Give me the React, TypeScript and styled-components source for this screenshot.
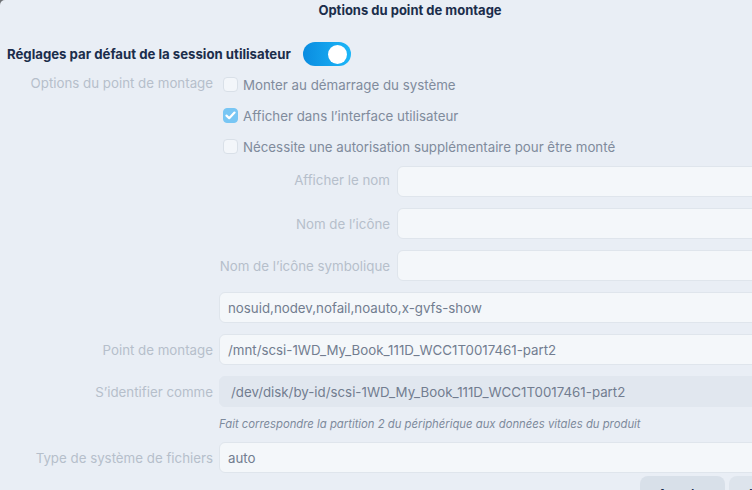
import styled, { createGlobalStyle } from "styled-components";

const GlobalStyle = createGlobalStyle`
  html, body {
    margin: 0;
    padding: 0;
    background: #6f7276;
    overflow: hidden;
  }
  body {
    font-family: Inter, "Noto Sans", sans-serif;
  }
`;

const checks = [
  { label: "Monter au démarrage du système", checked: false },
  { label: "Afficher dans l’interface utilisateur", checked: true },
  { label: "Nécessite une autorisation supplémentaire pour être monté", checked: false },
];

const namedFields = ["Afficher le nom", "Nom de l’icône", "Nom de l’icône symbolique"];

export default function App() {
  return (
    <>
      <GlobalStyle />
      <Window>
        <TitleBar>Options du point de montage</TitleBar>
        <SessionRow>
          <SectionTitle>Réglages par défaut de la session utilisateur</SectionTitle>
          <Toggle on>
            <Knob />
          </Toggle>
        </SessionRow>

        <FormGrid>
          <Label>Options du point de montage</Label>
          <CheckList>
            {checks.map((c) => (
              <CheckRow key={c.label}>
                <Box checked={c.checked}>
                  {c.checked && (
                    <svg width="11" height="9" viewBox="0 0 11 9">
                      <path
                        d="M1.5 4.6 L4.2 7.2 L9.5 1.6"
                        fill="none"
                        stroke="#fff"
                        strokeWidth="2.2"
                        strokeLinecap="round"
                        strokeLinejoin="round"
                      />
                    </svg>
                  )}
                </Box>
                <CheckText>{c.label}</CheckText>
              </CheckRow>
            ))}
          </CheckList>

          <span />
          <SubGrid>
            {namedFields.flatMap((name) => [
              <Label key={name + "-l"}>{name}</Label>,
              <Field key={name + "-f"} />,
            ])}
          </SubGrid>

          <span />
          <Field>nosuid,nodev,nofail,noauto,x-gvfs-show</Field>

          <Label>Point de montage</Label>
          <Field>/mnt/scsi-1WD_My_Book_111D_WCC1T0017461-part2</Field>

          <Label>S’identifier comme</Label>
          <Field readonly>/dev/disk/by-id/scsi-1WD_My_Book_111D_WCC1T0017461-part2</Field>

          <span />
          <Hint>Fait correspondre la partition 2 du périphérique aux données vitales du produit</Hint>

          <Label>Type de système de fichiers</Label>
          <Field>auto</Field>
        </FormGrid>

        <ButtonRow>
          <Button>Annuler</Button>
          <Button primary>Valider</Button>
        </ButtonRow>
      </Window>
    </>
  );
}

const Window = styled.div`
  width: 820px;
  height: 520px;
  background: #e9eef5;
  border-top-left-radius: 5px;
  box-sizing: border-box;
  padding: 0 6px 0 0;
`;

const TitleBar = styled.div`
  height: 20px;
  line-height: 21px;
  text-align: center;
  font-size: 13px;
  font-weight: 700;
  color: #1b2d4b;
  padding-left: 6px;
`;

const SessionRow = styled.div`
  display: flex;
  align-items: center;
  gap: 12px;
  margin-top: 22px;
  padding-left: 7px;
  height: 24px;
`;

const SectionTitle = styled.div`
  font-size: 13.2px;
  font-weight: 700;
  color: #1b2d4b;
`;

const Toggle = styled.div<{ on?: boolean }>`
  width: 48px;
  height: 24px;
  border-radius: 12px;
  box-sizing: border-box;
  padding: 0 4px;
  display: flex;
  align-items: center;
  justify-content: ${({ on }) => (on ? "flex-end" : "flex-start")};
  background: ${({ on }) =>
    on ? "linear-gradient(90deg, #0a8ce0, #1cb6f8)" : "#c9d2dd"};
`;

const Knob = styled.div`
  width: 19px;
  height: 19px;
  border-radius: 50%;
  background: #fff;
`;

const FormGrid = styled.div`
  display: grid;
  grid-template-columns: 213px 1fr;
  column-gap: 6px;
  row-gap: 11px;
  margin-top: 3px;
  align-items: center;
`;

const Label = styled.div`
  text-align: right;
  font-size: 13.3px;
  color: #b6bfcb;
  white-space: nowrap;
  align-self: center;

  &:first-child {
    align-self: start;
    margin-top: 6px;
  }
`;

const CheckList = styled.div`
  display: flex;
  flex-direction: column;
  margin-bottom: -7px;
`;

const CheckRow = styled.div`
  display: flex;
  align-items: center;
  height: 31px;
  padding-left: 4px;
  gap: 5px;
`;

const Box = styled.div<{ checked?: boolean }>`
  width: 15px;
  height: 15px;
  box-sizing: border-box;
  border-radius: 4px;
  display: flex;
  align-items: center;
  justify-content: center;
  background: ${({ checked }) => (checked ? "#78c6f4" : "#f3f6fa")};
  border: 1px solid ${({ checked }) => (checked ? "#78c6f4" : "#d9e0e8")};
`;

const CheckText = styled.span`
  font-size: 13.3px;
  color: #808b9c;
`;

const SubGrid = styled.div`
  display: grid;
  grid-template-columns: 171px 1fr;
  column-gap: 7px;
  row-gap: 11px;
  align-items: center;
`;

const Field = styled.div<{ readonly?: boolean }>`
  height: 31px;
  box-sizing: border-box;
  display: flex;
  align-items: center;
  padding: 0 ${({ readonly }) => (readonly ? "11px" : "8px")};
  border-radius: 6px;
  font-size: 13.3px;
  color: #727d90;
  white-space: nowrap;
  background: ${({ readonly }) => (readonly ? "#e1e7ef" : "#f4f7fa")};
  border: 1px solid ${({ readonly }) => (readonly ? "#e1e7ef" : "#dfe5ec")};
`;

const Hint = styled.div`
  height: 13px;
  line-height: 13px;
  font-size: 11.3px;
  font-style: italic;
  color: #7d8a9c;
  white-space: nowrap;
`;

const ButtonRow = styled.div`
  display: flex;
  justify-content: flex-end;
  gap: 4px;
  margin-top: 3px;
`;

const Button = styled.div<{ primary?: boolean }>`
  width: 85px;
  height: 36px;
  border-radius: 8px;
  display: flex;
  align-items: center;
  justify-content: center;
  font-size: 13px;
  font-weight: 600;
  color: #1b2d4b;
  background: ${({ primary }) => (primary ? "#dde4ec" : "#d8e0e9")};
`;
